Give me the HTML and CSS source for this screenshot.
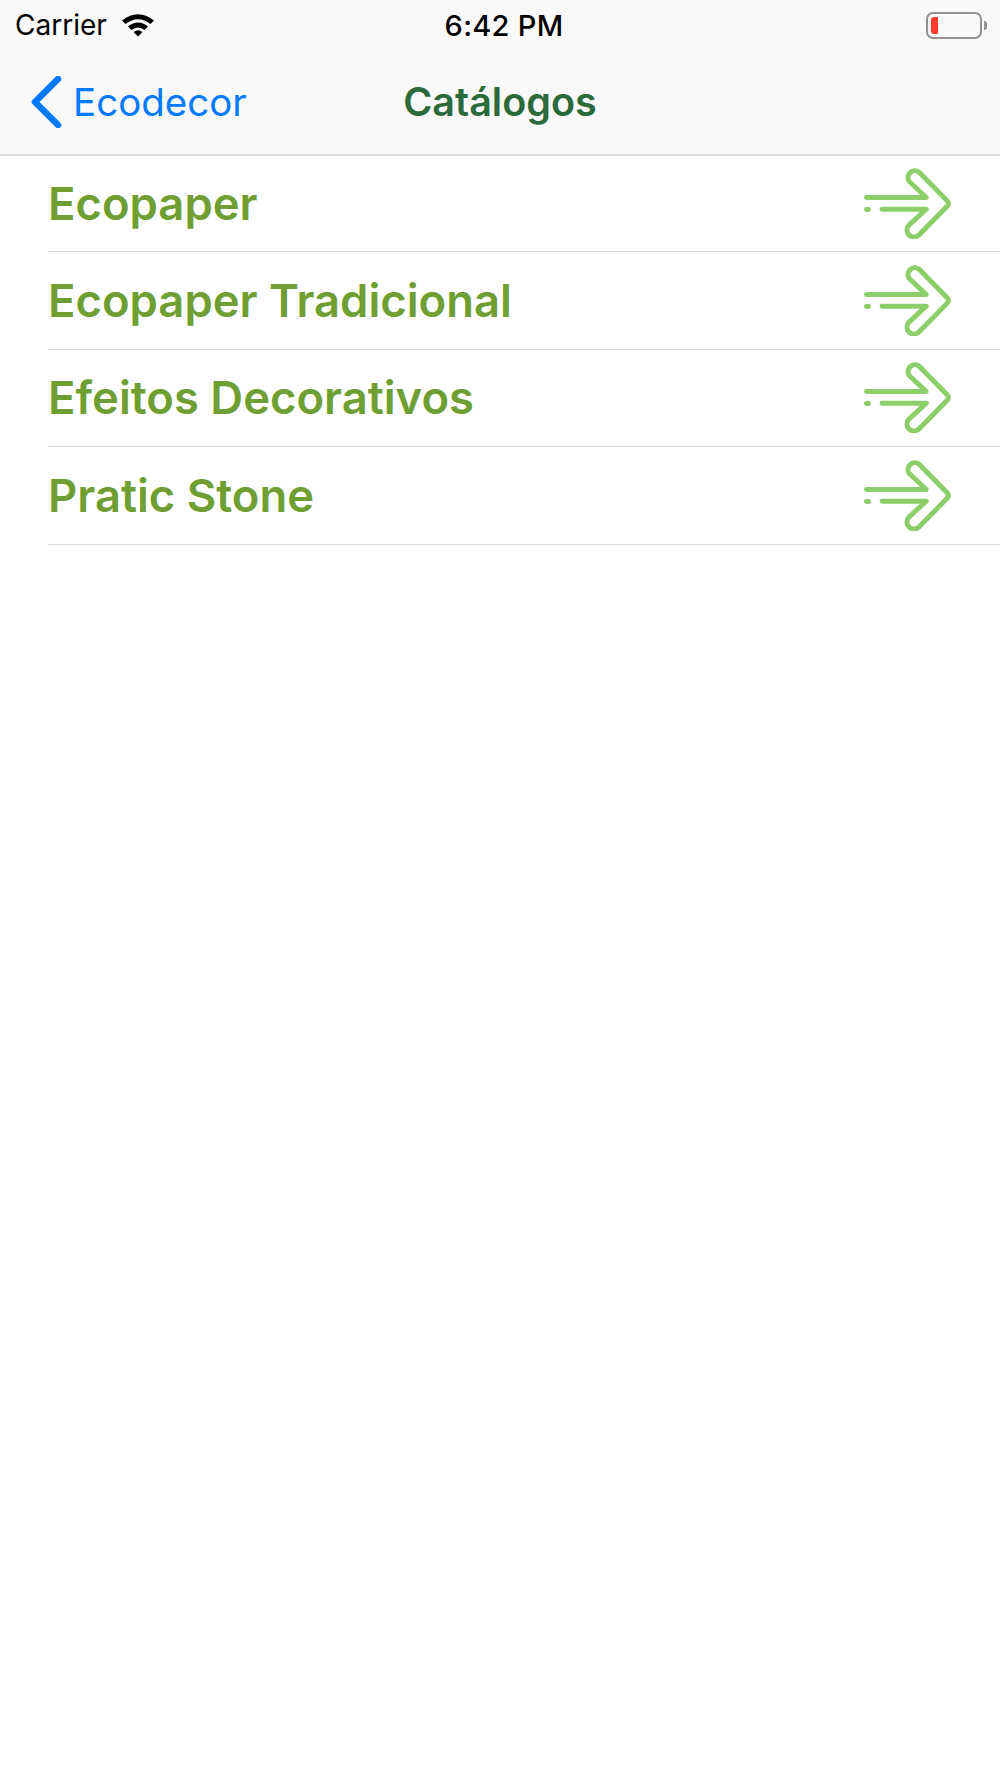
FILE: index.html
```html
<!DOCTYPE html>
<html lang="en">
<head>
  <meta charset="utf-8">
  <meta name="viewport" content="width=device-width, initial-scale=1.0" />
  <title>Catálogos</title>
  <link rel="stylesheet" href="styles.css">
</head>

<body>
<header class="top-bar">
  <div class="status-bar">
    <div class="status-left">
      <span class="carrier">Carrier</span>
      <svg class="wifi" width="36" height="26" viewBox="0 0 36 26">
        <path d="M2 9.5 Q18 -3 34 9.5 L30.5 13 Q18 3.5 5.5 13 Z" />
        <path d="M8 15.5 Q18 7.5 28 15.5 L24.5 19 Q18 14 11.5 19 Z" />
        <path d="M13.5 21 Q18 17.5 22.5 21 L18 25.5 Z" />
      </svg>
    </div>
    <span class="clock">6:42 PM</span>
    <div class="status-right">
      <div class="battery"><div class="battery-level"></div></div>
      <div class="battery-tip"></div>
    </div>
  </div>
  <nav class="nav-bar">
    <a class="back" href="#">
      <svg class="back-arrow" width="32" height="52" viewBox="0 0 32 52">
        <path d="M28 3 L5 26 L28 49" />
      </svg>
      <span>Ecodecor</span>
    </a>
    <h1 class="nav-title">Catálogos</h1>
  </nav>
</header>

<ul class="catalog-list">
  <li class="catalog-item">
    <span class="catalog-name">Ecopaper</span>
    <svg class="go-arrow" viewBox="40 30 270 220"><use href="#arrow" /></svg>
  </li>
  <li class="catalog-item">
    <span class="catalog-name">Ecopaper Tradicional</span>
    <svg class="go-arrow" viewBox="40 30 270 220"><use href="#arrow" /></svg>
  </li>
  <li class="catalog-item">
    <span class="catalog-name">Efeitos Decorativos</span>
    <svg class="go-arrow" viewBox="40 30 270 220"><use href="#arrow" /></svg>
  </li>
  <li class="catalog-item">
    <span class="catalog-name">Pratic Stone</span>
    <svg class="go-arrow" viewBox="40 30 270 220"><use href="#arrow" /></svg>
  </li>
</ul>

<svg class="icon-defs" width="0" height="0">
  <defs>
    <g id="arrow">
      <path d="M50 125 H230 L178 76 A21 21 0 0 1 208 48 L293 135 Q301 143 293 151 L208 238 A21 21 0 0 1 178 208 L230 160 H97" />
      <path d="M50 161 H56" />
    </g>
  </defs>
</svg>
</body>
</html>
```

FILE: styles.css
```css
html, body {
  margin: 0;
  padding: 0;
  background: #fff;
}
body {
  font-family: Inter, "Liberation Sans", sans-serif;
}
.top-bar {
  height: 154px;
  background: #f9f9f9;
  border-bottom: 2px solid #dcdcdc;
}
.status-bar {
  height: 50px;
  display: grid;
  grid-template-columns: 1fr auto 1fr;
  align-items: center;
  padding: 0 13px 0 15px;
  color: #000;
}
.status-left {
  display: flex;
  align-items: center;
  gap: 13px;
}
.carrier {
  font-size: 28px;
}
.wifi {
  fill: #000;
  margin-top: -2px;
}
.clock {
  margin-left: 6px;
  font-size: 29px;
  font-weight: 500;
  letter-spacing: 0.3px;
}
.status-right {
  display: flex;
  align-items: center;
  justify-content: flex-end;
  gap: 2px;
}
.battery {
  box-sizing: border-box;
  width: 56px;
  height: 27px;
  padding: 3px;
  border: 2.5px solid #929292;
  border-radius: 7px;
}
.battery-level {
  width: 7px;
  height: 100%;
  background: #ff3b30;
  border-radius: 3px 1px 1px 3px;
}
.battery-tip {
  width: 3px;
  height: 9px;
  background: #929292;
  border-radius: 0 3px 3px 0;
}
.nav-bar {
  height: 103px;
  display: grid;
  grid-template-columns: 1fr auto 1fr;
  align-items: center;
  padding: 0 30px;
}
.back {
  display: flex;
  align-items: center;
  gap: 11px;
  color: #007aff;
  font-size: 38.5px;
  text-decoration: none;
}
.back-arrow {
  fill: none;
  stroke: #007aff;
  stroke-width: 6.5;
  stroke-linecap: round;
  stroke-linejoin: round;
}
.nav-title {
  margin: 0;
  font-size: 39.5px;
  font-weight: 600;
  color: #2b6a3a;
}
.catalog-list {
  margin: -1px 0 0;
  padding: 0 0 0 48px;
  list-style: none;
}
.catalog-item {
  box-sizing: border-box;
  height: 97.4px;
  display: flex;
  align-items: center;
  justify-content: space-between;
  padding-right: 47px;
  border-bottom: 1px solid #d9d9d9;
}
.catalog-name {
  font-size: 45.4px;
  font-weight: 600;
  color: #6f9f33;
}
.go-arrow {
  width: 90px;
  height: 73px;
  margin-top: -2px;
  fill: none;
  stroke: #8ccf6a;
  stroke-width: 15;
  stroke-linecap: round;
  stroke-linejoin: round;
  filter: blur(0.7px);
}
.icon-defs {
  display: block;
}
```
